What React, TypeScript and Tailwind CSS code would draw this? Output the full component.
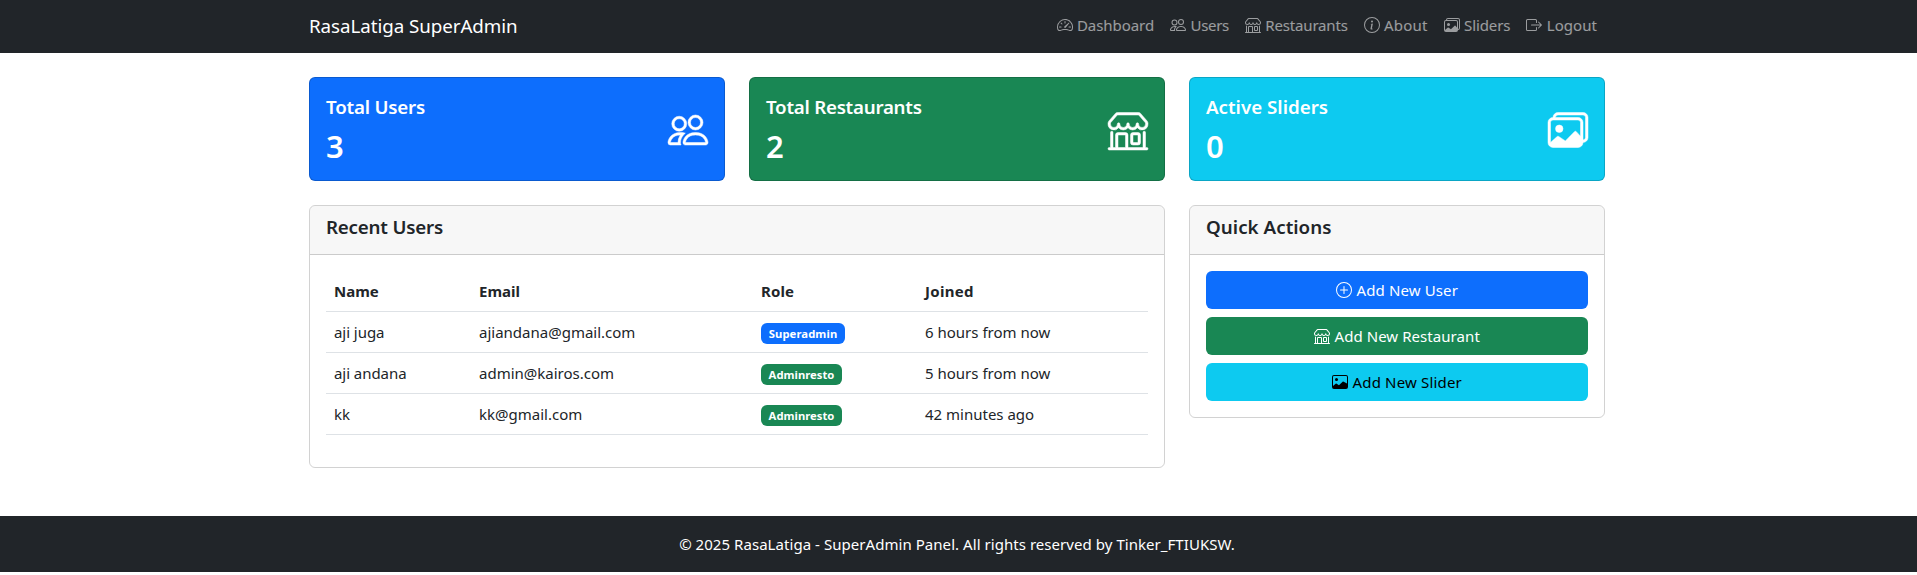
import React from "react";
import type { IconType } from "react-icons";
import {
  BsBoxArrowRight,
  BsImage,
  BsImages,
  BsInfoCircle,
  BsPeople,
  BsPlusCircle,
  BsShop,
  BsSpeedometer2,
} from "react-icons/bs";

type Item = { label: string; icon: IconType; tone: string };

const navItems: Item[] = [
  { label: "Dashboard", icon: BsSpeedometer2, tone: "w-[77.1px] tracking-[-0.061px]" },
  { label: "Users", icon: BsPeople, tone: "w-[38.5px] tracking-[-0.299px]" },
  { label: "Restaurants", icon: BsShop, tone: "w-[82.3px] tracking-[-0.176px]" },
  { label: "About", icon: BsInfoCircle, tone: "w-[43.6px] tracking-[0.203px]" },
  { label: "Sliders", icon: BsImages, tone: "w-[46.4px] tracking-[-0.096px]" },
  { label: "Logout", icon: BsBoxArrowRight, tone: "w-[50.2px] tracking-[0.043px]" },
];

const stats = [
  { label: "Total Users", value: 3, icon: BsPeople, bg: "bg-[#0d6efd]", tracking: "tracking-[-0.2px]" },
  { label: "Total Restaurants", value: 2, icon: BsShop, bg: "bg-[#198754]", tracking: "tracking-[-0.26px]" },
  { label: "Active Sliders", value: 0, icon: BsImages, bg: "bg-[#0dcaf0]", tracking: "tracking-[0px]" },
];

const users = [
  { name: "aji juga", email: "ajiandana@gmail.com", role: "Superadmin", joined: "6 hours from now", badge: "bg-[#0d6efd] w-[84px] tracking-[0.1px]" },
  { name: "aji andana", email: "admin@kairos.com", role: "Adminresto", joined: "5 hours from now", badge: "bg-[#198754] w-[81px] tracking-[0.02px]" },
  { name: "kk", email: "kk@gmail.com", role: "Adminresto", joined: "42 minutes ago", badge: "bg-[#198754] w-[81px] tracking-[0.02px]" },
];

const actions: Item[] = [
  { label: "Add New User", icon: BsPlusCircle, tone: "bg-[#0d6efd] text-white tracking-[0.127px]" },
  { label: "Add New Restaurant", icon: BsShop, tone: "bg-[#198754] text-white tracking-[0.06px]" },
  { label: "Add New Slider", icon: BsImage, tone: "bg-[#0dcaf0] text-black tracking-[0.168px]" },
];

const columns = "grid grid-cols-[145px_282px_164px_1fr] border-b border-[#dee2e6] h-[41px] py-2 leading-6";

function Panel({ title, tracking, children }: { title: string; tracking: string; children: React.ReactNode }) {
  return (
    <section className="overflow-hidden rounded-md border border-black/[0.175]">
      <header className="h-[49px] border-b border-black/[0.175] bg-black/[0.03] px-4 py-2">
        <h5 className={`h-6 text-[18.75px] leading-[25px] font-semibold ${tracking}`}>{title}</h5>
      </header>
      <div className="p-4">{children}</div>
    </section>
  );
}

export default function App() {
  return (
    <div className="min-h-[575px] bg-white font-['Noto_Sans','Open_Sans',sans-serif] text-[15px] text-[#212529]">
      <nav className="h-[53px] bg-[#212529]">
        <div className="ml-[297px] flex h-[50px] w-[1320px] items-center justify-between px-3">
          <a className="h-[30px] text-[18.75px] leading-[31px] tracking-[-0.055px] whitespace-nowrap text-white">
            RasaLatiga SuperAdmin
          </a>
          <ul className="flex">
            {navItems.map(({ label, icon: Icon, tone }) => (
              <li key={label} className="flex items-center gap-[4.4px] px-2 text-white/55">
                <Icon className="size-4 shrink-0" />
                <span className={`h-6 leading-6 whitespace-nowrap ${tone}`}>{label}</span>
              </li>
            ))}
          </ul>
        </div>
      </nav>

      <main className="ml-[297px] w-[1320px] px-3 pt-6">
        <div className="grid grid-cols-3 gap-6">
          {stats.map(({ label, value, icon: Icon, bg, tracking }) => (
            <section
              key={label}
              className={`flex h-[104.4px] items-center justify-between rounded-md border border-black/[0.175] p-4 text-white ${bg}`}
            >
              <div className="h-[70.4px]">
                <h5 className={`mb-2 h-6 text-[18.75px] leading-[25px] font-semibold ${tracking}`}>{label}</h5>
                <h2 className="h-[38.4px] text-[31px] leading-[41px] font-semibold">{value}</h2>
              </div>
              <Icon className="mt-[2px] size-10 overflow-visible stroke-current [stroke-width:0.2]" />
            </section>
          ))}
        </div>

        <div className="mt-6 grid grid-cols-[856px_416px] items-start gap-6">
          <Panel title="Recent Users" tracking="tracking-[-0.2px]">
            <div className="mb-4">
              <div className={`${columns} font-bold`}>
                <span className="px-2">Name</span>
                <span className="px-2">Email</span>
                <span className="px-2 tracking-[0.1px]">Role</span>
                <span className="px-2 tracking-[0.3px]">Joined</span>
              </div>
              {users.map((u) => (
                <div key={u.email} className={columns}>
                  <span className="px-2 tracking-[-0.05px]">{u.name}</span>
                  <span className="px-2">{u.email}</span>
                  <span className="px-2 pt-[3px]">
                    <span
                      className={`flex h-[20.4px] items-center justify-center rounded-md text-[11.25px] leading-none font-bold text-white ${u.badge}`}
                    >
                      {u.role}
                    </span>
                  </span>
                  <span className="px-2">{u.joined}</span>
                </div>
              ))}
            </div>
          </Panel>

          <Panel title="Quick Actions" tracking="tracking-[0.035px]">
            <div className="flex flex-col gap-2">
              {actions.map(({ label, icon: Icon, tone }) => (
                <button key={label} className={`flex h-[38px] items-center justify-center gap-[4.4px] rounded-md ${tone}`}>
                  <Icon className="size-4" />
                  <span className="h-6 leading-6">{label}</span>
                </button>
              ))}
            </div>
          </Panel>
        </div>
      </main>

      <footer className="mt-12 h-[56px] bg-[#212529] py-4 text-white">
        <p className="ml-[297px] h-6 w-[1320px] text-center leading-6 tracking-[0.05px]">
          © 2025 RasaLatiga - SuperAdmin Panel. All rights reserved by Tinker_FTIUKSW.
        </p>
      </footer>
    </div>
  );
}
